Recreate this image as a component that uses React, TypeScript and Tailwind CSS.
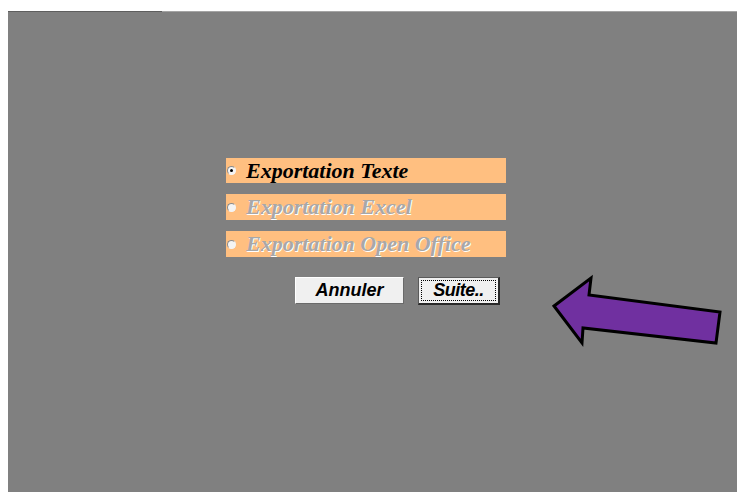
import React from "react";

function Radio({ checked }: { checked?: boolean }) {
  return (
    <span className="relative flex h-[9px] w-[9px] shrink-0 items-center justify-center rounded-full border border-t-[#8a8a8a] border-l-[#8a8a8a] border-b-[#f4f4f4] border-r-[#f4f4f4] bg-[#f4f4f4]">
      {checked && <span className="h-[3px] w-[3px] rounded-full bg-black" />}
    </span>
  );
}

function Row({ label, checked, disabled, tall }: { label: string; checked?: boolean; disabled?: boolean; tall?: boolean }) {
  return (
    <div className={"flex w-[280px] items-center bg-[#ffbf80] pl-[1px] " + (tall ? "h-[26px]" : "h-[25px]")}>
      <Radio checked={checked} />
      <span
        className={
          "ml-[10px] whitespace-nowrap text-[22px] font-bold italic leading-none [font-family:'Liberation_Serif',serif] " +
          (disabled ? "text-[#a8a8a8] [text-shadow:1px_1px_0_#ffffff]" : "text-black")
        }
      >
        {label}
      </span>
    </div>
  );
}

export default function App() {
  return (
    <div className="relative h-[493px] w-[737px] overflow-hidden bg-white">
      <div className="ml-[8px] mt-[11px] flex h-[481px] w-[729px] flex-col bg-[#808080]">
        <div className="flex h-[1px] w-full">
          <div className="h-[1px] w-[154px] bg-[#5e5e5e]" />
          <div className="h-[1px] flex-1 bg-[#a4a4a4]" />
        </div>
        <div className="flex flex-col pl-[218px] pt-[146px]">
          <div className="flex flex-col gap-[11px]">
            <Row label="Exportation Texte" checked />
            <Row label="Exportation Excel" disabled tall />
            <Row label="Exportation Open Office" disabled tall />
          </div>
          <div className="ml-[69px] mt-[20px] flex gap-[14px]">
            <div className="flex h-[27px] w-[109px] items-center justify-center border border-t-white border-l-white border-b-[#6a6a6a] border-r-[#6a6a6a] bg-[#f0f0f0] text-[18px] font-bold italic text-black [font-family:'Liberation_Sans',sans-serif]">
              Annuler
            </div>
            <div className="flex h-[28px] w-[82px] items-center justify-center border border-t-[#5a5a5a] border-l-[#5a5a5a] border-b-[#2a2a2a] border-r-[#2a2a2a] border-b-2 border-r-2 bg-[#f0f0f0] p-[2px]">
              <div className="flex h-full w-full items-center justify-center border border-dotted border-black text-[18px] font-bold italic tracking-[-0.5px] text-black [font-family:'Liberation_Sans',sans-serif]">
                Suite..
              </div>
            </div>
          </div>
        </div>
      </div>
      <svg className="pointer-events-none absolute left-0 top-0" width="737" height="493" viewBox="0 0 737 493">
        <polygon
          points="554,306 591,278 589,295 720,312 716,343 583,328 582,343"
          fill="#7030a0"
          stroke="#000"
          strokeWidth="3"
          strokeLinejoin="miter"
        />
      </svg>
    </div>
  );
}
